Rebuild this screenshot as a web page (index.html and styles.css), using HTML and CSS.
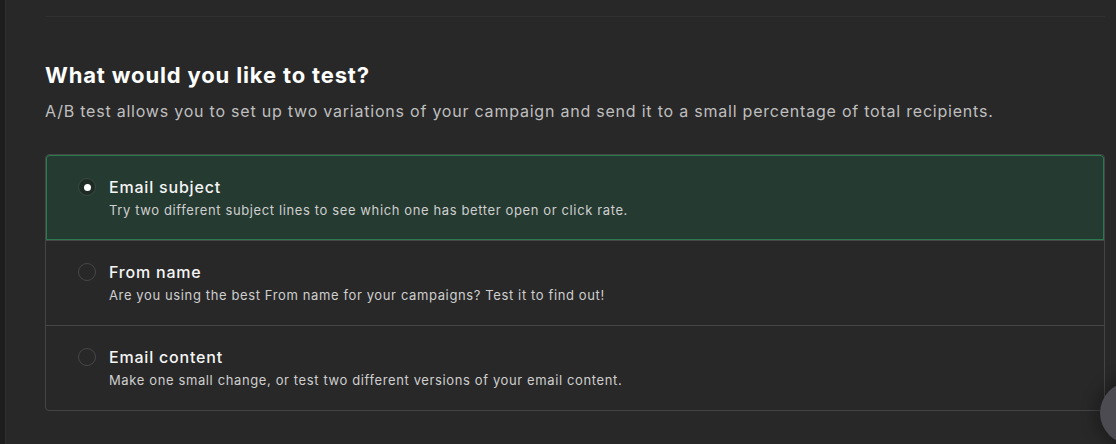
FILE: index.html
```html
<!DOCTYPE html>
<html>
<head>
<meta charset="utf-8">
<link rel="stylesheet" href="styles.css">
</head>
<body>
<div class="app">
  <div class="rail"></div>
  <main class="content">
    <div class="divider"></div>
    <h2 class="heading">What would you like to test?</h2>
    <p class="lead">A/B test allows you to set up two variations of your campaign and send it to a small percentage of total recipients.</p>
    <div class="options">
      <label class="option selected">
        <span class="radio"><span class="dot"></span></span>
        <span class="text">
          <span class="title">Email subject</span>
          <span class="desc">Try two different subject lines to see which one has better open or click rate.</span>
        </span>
      </label>
      <label class="option">
        <span class="radio"></span>
        <span class="text">
          <span class="title">From name</span>
          <span class="desc">Are you using the best From name for your campaigns? Test it to find out!</span>
        </span>
      </label>
      <label class="option">
        <span class="radio"></span>
        <span class="text">
          <span class="title">Email content</span>
          <span class="desc">Make one small change, or test two different versions of your email content.</span>
        </span>
      </label>
    </div>
  </main>
  <div class="fab"></div>
</div>
</body>
</html>
```

FILE: styles.css
```css
html, body {
  margin: 0;
  padding: 0;
  background: #282828;
  height: 100%;
  overflow: hidden;
}
body {
  font-family: Inter, "Noto Sans", sans-serif;
  color: #f2f2f2;
}
.app {
  display: flex;
  height: 444px;
  position: relative;
}
.rail {
  width: 5px;
  background: #1e1e1e;
  border-right: 1px solid #2f2f2f;
  flex-shrink: 0;
}
.content {
  flex: 1;
  padding: 16px 11px 0 39px;
}
.divider {
  height: 1px;
  background: #303030;
}
.heading {
  margin: 44px 0 0;
  font-size: 22px;
  font-weight: 700;
  line-height: 29px;
  color: #ffffff;
  letter-spacing: 0.85px;
}
.lead {
  margin: 10px 0 0;
  font-size: 16px;
  line-height: 22px;
  color: #bfbfbf;
  letter-spacing: 0.78px;
}
.options {
  margin-top: 32px;
  border: 1px solid #444444;
  border-radius: 4px;
  overflow: hidden;
}
.option {
  display: flex;
  align-items: flex-start;
  height: 85px;
  box-sizing: border-box;
  padding: 21px 20px 0 32px;
  border-top: 1px solid #464646;
}
.option:first-child {
  border-top: none;
  padding-top: 22px;
}
.option.selected {
  background: #253a31;
  box-shadow: inset 0 0 0 1px #2b7a4f;
  border-radius: 4px 4px 0 0;
}
.radio {
  width: 16px;
  height: 16px;
  border: 1px solid #474747;
  border-radius: 50%;
  box-sizing: content-box;
  margin-top: 1px;
  display: flex;
  align-items: center;
  justify-content: center;
  flex-shrink: 0;
}
.selected .radio {
  background: #1f2c25;
  border-color: #3a4a42;
}
.dot {
  width: 7px;
  height: 7px;
  border-radius: 50%;
  background: #ffffff;
}
.text {
  display: flex;
  flex-direction: column;
  margin-left: 13px;
}
.title {
  font-size: 16px;
  font-weight: 500;
  line-height: 20px;
  color: #f5f5f5;
  letter-spacing: 0.8px;
}
.desc {
  margin-top: 5px;
  font-size: 13px;
  line-height: 17px;
  color: #cfcfcf;
  letter-spacing: 0.62px;
}
.fab {
  position: absolute;
  left: 1100px;
  top: 382px;
  width: 62px;
  height: 62px;
  border-radius: 50%;
  background: #4b4b51;
  box-shadow: 0 0 14px 6px rgba(0, 0, 0, 0.25);
}
```
